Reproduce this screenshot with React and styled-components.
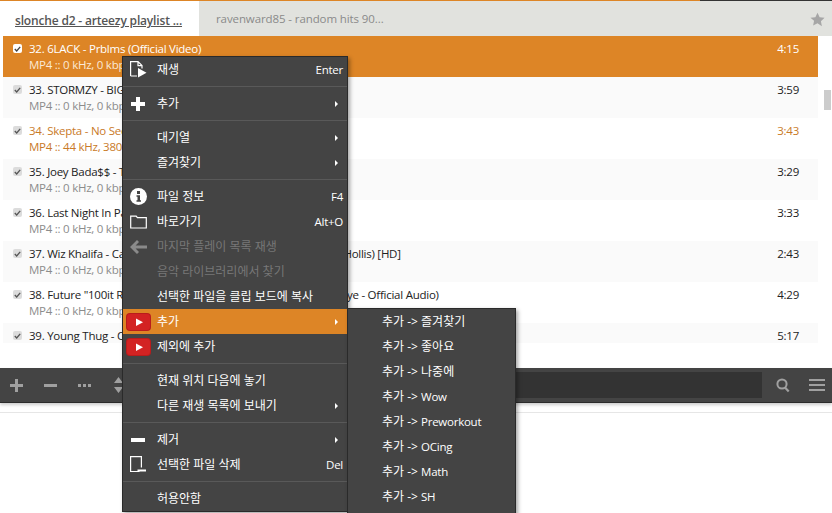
import React from "react";
import styled, { createGlobalStyle } from "styled-components";

const FONT = `"Open Sans", "Noto Sans CJK KR", sans-serif`;

const tracks = [
    { id: 32, title: "32. 6LACK - Prblms (Official Video)", meta: "MP4 :: 0 kHz, 0 kbps, 12.33 MB", time: "4:15", selected: true },
    { id: 33, title: "33. STORMZY - BIG FOR YOUR BOOTS", meta: "MP4 :: 0 kHz, 0 kbps, 9.54 MB", time: "3:59", even: true },
    { id: 34, title: "34. Skepta - No Security", meta: "MP4 :: 44 kHz, 380 kbps, 8.18 MB", time: "3:43", playing: true },
    { id: 35, title: "35. Joey Bada$$ - Temptation", meta: "MP4 :: 0 kHz, 0 kbps, 8.01 MB", time: "3:29", even: true },
    { id: 36, title: "36. Last Night In Paradise", meta: "MP4 :: 0 kHz, 0 kbps, 8.40 MB", time: "3:33" },
    { id: 37, title: "37. Wiz Khalifa - Cabin Fever feat. Curren$y, Snoop Dogg, and Hollis) [HD]", meta: "MP4 :: 0 kHz, 0 kbps, 6.12 MB", time: "2:43", even: true },
    { id: 38, title: "38. Future \"100it Racks\" ft. Drake, Young Thug, Metro, and Kanye - Official Audio)", meta: "MP4 :: 0 kHz, 0 kbps, 10.2 MB", time: "4:29" },
    { id: 39, title: "39. Young Thug - Constantly Hating", meta: "MP4 :: 0 kHz, 0 kbps, 11.9 MB", time: "5:17", even: true },
];

const PageIcon = () => (
    <svg width="17" height="17" viewBox="0 0 17 17" fill="none">
        <path d="M.6 15V.6h7.400l4 4v3M8 .6v4h4M.6 15h6.400" stroke="#fff" strokeWidth="1.200" />
        <path d="M8 7l8.500 4.700L8 16.500z" fill="#fff" />
    </svg>
);
const PlusIcon = () => (
    <svg width="16" height="16" viewBox="0 0 16 16">
        <path d="M6 1h4v5h5v4h-5v5H6v-5H1V6h5z" fill="#fff" />
    </svg>
);
const InfoIcon = () => (
    <svg width="17" height="17" viewBox="0 0 17 17">
        <circle cx="8.5" cy="8.5" r="8.5" fill="#fff" />
        <rect x="7" y="3" width="3" height="3" fill="#444" />
        <path d="M6.5 7.2H10v5h1v1.6H6.5v-1.6h1v-3.4h-1z" fill="#444" />
    </svg>
);
const FolderIcon = () => (
    <svg width="17" height="15" viewBox="0 0 17 15" fill="none">
        <path d="M.7 14V2.2h5.5l1.2 1.5h8.9V14z" stroke="#fff" strokeWidth="1.2" />
    </svg>
);
const BackIcon = () => (
    <svg width="17" height="14" viewBox="0 0 17 14">
        <path d="M7 0l2 2-3.4 3.400H17v3H5.600L9 12l-2 2L0 7z" fill="#8a8a8a" />
    </svg>
);
const YoutubeIcon = () => (
    <svg width="25" height="18" viewBox="0 0 25 18">
        <rect x="0" y="0" width="25" height="18" rx="4" fill="#b91c1c" />
        <rect x="1" y="1" width="23" height="16" rx="3" fill="#d32323" />
        <path d="M10 5.500l7 3.700-7 3.800z" fill="#fff" />
    </svg>
);
const MinusIcon = () => (
    <svg width="14" height="4" viewBox="0 0 14 4">
        <rect width="14" height="4" fill="#fff" />
    </svg>
);
const TrashIcon = () => (
    <svg width="17" height="17" viewBox="0 0 17 17" fill="none">
        <path d="M9.500 15.500H.6V.6h10.800v11" stroke="#fff" strokeWidth="1.200" />
        <rect x="7.500" y="13.500" width="8.500" height="2" fill="#fff" />
    </svg>
);
const CheckIcon = ({ color }) => (
    <svg width="7" height="6" viewBox="0 0 7 6" fill="none">
        <path d="M.8 3l1.900 2L6.200.8" stroke={color} strokeWidth="1.300" />
    </svg>
);

const topMenu = [
    [{ label: "재생", icon: <PageIcon />, shortcut: "Enter", strong: true }],
    [{ label: "추가", icon: <PlusIcon />, arrow: true }],
    [
        { label: "대기열", arrow: true },
        { label: "즐겨찾기", arrow: true },
    ],
    [
        { label: "파일 정보", icon: <InfoIcon />, shortcut: "F4" },
        { label: "바로가기", icon: <FolderIcon />, shortcut: "Alt+O" },
        { label: "마지막 플레이 목록 재생", icon: <BackIcon />, disabled: true },
        { label: "음악 라이브러리에서 찾기", disabled: true },
        { label: "선택한 파일을 클립 보드에 복사" },
        { label: "추가", icon: <YoutubeIcon />, arrow: true, active: true },
        { label: "제외에 추가", icon: <YoutubeIcon /> },
    ],
    [
        { label: "현재 위치 다음에 놓기" },
        { label: "다른 재생 목록에 보내기", arrow: true },
    ],
    [
        { label: "제거", icon: <MinusIcon />, arrow: true },
        { label: "선택한 파일 삭제", icon: <TrashIcon />, shortcut: "Del" },
    ],
    [{ label: "허용안함" }],
];

const subMenu = [
    { name: "즐겨찾기" },
    { name: "좋아요" },
    { name: "나중에" },
    { name: "Wow", latin: true },
    { name: "Preworkout", latin: true },
    { name: "OCing", latin: true },
    { name: "Math", latin: true },
    { name: "SH", latin: true },
];

const App = () => (
    <Page>
        <GlobalStyle />
        <Progress>
            <ProgressFill style={{ width: `${(700 / 832) * 100}%` }} />
        </Progress>
        <Tabs>
            <ActiveTab>slonche d2 - arteezy playlist ...</ActiveTab>
            <IdleTab>
                <IdleTitle>ravenward85 - random hits 90...</IdleTitle>
                <Star viewBox="0 0 24 24">
                    <path d="M12 1l3.400 7.300 7.900 1-5.800 5.500 1.500 7.900L12 17.900l-7 3.800 1.500-7.900L.7 9.300l7.900-1z" fill="#a6a6a6" />
                </Star>
            </IdleTab>
        </Tabs>
        <ListArea>
            <TrackList>
                {tracks.map(t => (
                    <Track key={t.id} selected={t.selected} even={t.even} playing={t.playing}>
                        <Check selected={t.selected}>
                            <CheckIcon color={t.selected ? "#444" : "#555"} />
                        </Check>
                        <TrackText>
                            <TrackTitle>{t.title}</TrackTitle>
                            <TrackMeta selected={t.selected} playing={t.playing}>{t.meta}</TrackMeta>
                        </TrackText>
                        <TrackTime>{t.time}</TrackTime>
                    </Track>
                ))}
            </TrackList>
            <ScrollThumb />
        </ListArea>
        <Toolbar>
            <ToolButton>
                <svg width="15" height="15" viewBox="0 0 15 15">
                    <path d="M5.500 1h3v5h5v3h-5v5h-3V9h-5V6h5z" fill="#a0a0a0" transform="translate(.5 0)" />
                </svg>
            </ToolButton>
            <ToolButton>
                <svg width="15" height="15" viewBox="0 0 15 15">
                    <rect x="1" y="6" width="13" height="3" fill="#a0a0a0" />
                </svg>
            </ToolButton>
            <ToolButton>
                <svg width="15" height="15" viewBox="0 0 15 15">
                    <path d="M1 6h3v3H1zM6 6h3v3H6zM11 6h3v3h-3z" fill="#a0a0a0" />
                </svg>
            </ToolButton>
            <ToolButton>
                <svg width="15" height="18" viewBox="0 0 15 18">
                    <path d="M7.500 1l4.500 6H3zM3 11h9l-4.500 6z" fill="#a0a0a0" />
                </svg>
            </ToolButton>
            <SearchField />
            <SearchGlyph viewBox="0 0 14 15" fill="none">
                <circle cx="6" cy="6" r="4.600" stroke="#a0a0a0" strokeWidth="2" />
                <path d="M9.200 9.800l3.500 3.700" stroke="#a0a0a0" strokeWidth="2.200" />
            </SearchGlyph>
            <MenuGlyph>
                <MenuBar />
                <MenuBar />
                <MenuBar />
            </MenuGlyph>
        </Toolbar>
        <FooterLine />

        <ContextMenu>
            {topMenu.map((group, i) => (
                <React.Fragment key={i}>
                    {i > 0 && <Separator />}
                    {group.map(item => (
                        <MenuItem key={item.label + i} active={item.active} disabled={item.disabled}>
                            <IconSlot>{item.icon}</IconSlot>
                            <ItemLabel>{item.label}</ItemLabel>
                            {item.shortcut && <Shortcut>{item.shortcut}</Shortcut>}
                            {item.arrow && <Arrow />}
                        </MenuItem>
                    ))}
                </React.Fragment>
            ))}
        </ContextMenu>
        <SubMenu>
            {subMenu.map(item => (
                <SubItem key={item.name}>
                    추가 -&gt; <SubName latin={item.latin}>{item.name}</SubName>
                </SubItem>
            ))}
        </SubMenu>
    </Page>
);

const GlobalStyle = createGlobalStyle`
    html, body {
        margin: 0;
        padding: 0;
        background: #fff;
    }
    body {
        font-family: ${FONT};
        font-size: 11.5px;
        overflow: hidden;
    }
`;

const Page = styled.div`
    position: relative;
    width: 832px;
    height: 513px;
    overflow: hidden;
    background: #fff;
`;

const Progress = styled.div`
    height: 1px;
    background: #333;
`;

const ProgressFill = styled.div`
    height: 100%;
    background: #dd8526;
`;

const Tabs = styled.div`
    display: flex;
    height: 35px;
`;

const ActiveTab = styled.div`
    width: 199px;
    box-sizing: border-box;
    padding: 11px 0 0 15px;
    font-size: 12px;
    font-weight: 600;
    letter-spacing: -0.17px;
    color: #555;
    text-decoration: underline;
    white-space: nowrap;
`;

const IdleTab = styled.div`
    flex: 1;
    display: flex;
    align-items: center;
    justify-content: space-between;
    padding: 0 7px 0 17px;
    background: #e1e2de;
`;

const IdleTitle = styled.span`
    font-size: 11.5px;
    letter-spacing: -0.1px;
    color: #8a8a8a;
`;

const Star = styled.svg`
    width: 15px;
    height: 15px;
    margin-top: 2px;
`;

const ListArea = styled.div`
    display: flex;
    height: 307px;
    overflow: hidden;
`;

const TrackList = styled.div`
    width: 815px;
    margin-left: 3px;
`;

const Track = styled.div`
    display: flex;
    height: 41px;
    box-sizing: border-box;
    padding: 5px 19px 0 10px;
    background: ${p => (p.selected ? "#dd8526" : p.even ? "#fafafa" : "#fff")};
    color: ${p => (p.selected ? "#fff" : p.playing ? "#c97a28" : "#222")};
    letter-spacing: -0.25px;
`;

const Check = styled.div`
    display: flex;
    align-items: center;
    justify-content: center;
    width: 9px;
    height: 9px;
    margin-top: 3px;
    border-radius: 2px;
    background: ${p => (p.selected ? "#fff" : "#dcdcdc")};
`;

const TrackText = styled.div`
    flex: 1;
    min-width: 0;
    margin-left: 7px;
    line-height: 16px;
    white-space: nowrap;
`;

const TrackTitle = styled.div``;

const TrackMeta = styled.div`
    color: ${p => (p.selected ? "#fbe9d5" : p.playing ? "#c97a28" : "#8c8c8c")};
`;

const TrackTime = styled.div`
    line-height: 16px;
`;

const ScrollThumb = styled.div`
    width: 7px;
    height: 20px;
    margin: 54px 0 0 6px;
    background: #ccc;
`;

const Toolbar = styled.div`
    display: flex;
    align-items: center;
    height: 34px;
    margin-top: 25px;
    padding-left: 9px;
    background: #444;
    border-bottom: 1px solid #2c2c2c;
    box-shadow: 0 2px 3px rgba(0, 0, 0, 0.2);
`;

const ToolButton = styled.div`
    display: flex;
    align-items: center;
    justify-content: center;
    width: 15px;
    height: 18px;
    margin-right: 19px;
`;

const SearchField = styled.div`
    width: 580px;
    height: 26px;
    margin-left: 37px;
    background: #333;
`;

const SearchGlyph = styled.svg`
    width: 14px;
    height: 15px;
    margin-left: 14px;
`;

const MenuGlyph = styled.div`
    display: flex;
    flex-direction: column;
    gap: 3px;
    margin-left: 19px;
`;

const MenuBar = styled.div`
    width: 16px;
    height: 2px;
    background: #a0a0a0;
`;

const FooterLine = styled.div`
    height: 1px;
    margin-top: 9px;
    background: #e6e6e6;
`;

const ContextMenu = styled.div`
    position: absolute;
    left: 122px;
    top: 56px;
    width: 226px;
    box-sizing: border-box;
    background: #444;
    border: 1px solid #2a2a2a;
    box-shadow: 2px 2px 4px rgba(0, 0, 0, 0.35);
`;

const Separator = styled.div`
    height: 1px;
    margin: 4px 0;
    background: #595959;
`;

const MenuItem = styled.div`
    display: flex;
    align-items: center;
    height: 25px;
    background: ${p => (p.active ? "#dd8526" : "transparent")};
    color: ${p => (p.disabled ? "#777" : "#fff")};
`;

const IconSlot = styled.div`
    display: flex;
    align-items: center;
    justify-content: center;
    width: 30px;
    flex: none;
`;

const ItemLabel = styled.div`
    flex: 1;
    margin-left: 4px;
    padding-bottom: 2px;
    font-size: 12px;
    white-space: nowrap;
`;

const Shortcut = styled.div`
    margin-right: 4px;
    font-size: 11.5px;
    letter-spacing: -0.25px;
    color: #fff;
`;

const Arrow = styled.div`
    width: 0;
    height: 0;
    margin-right: 9px;
    border-left: 3px solid #fff;
    border-top: 3px solid transparent;
    border-bottom: 3px solid transparent;
`;

const SubMenu = styled.div`
    position: absolute;
    left: 347px;
    top: 308px;
    width: 169px;
    height: 210px;
    box-sizing: border-box;
    background: #444;
    border: 1px solid #2a2a2a;
    box-shadow: 2px 2px 4px rgba(0, 0, 0, 0.35);
`;

const SubItem = styled.div`
    height: 25px;
    line-height: 25px;
    padding-left: 34px;
    color: #fff;
    font-size: 12px;
    white-space: nowrap;
`;

const SubName = styled.span`
    font-size: ${p => (p.latin ? "11.5px" : "12px")};
    letter-spacing: ${p => (p.latin ? "-0.25px" : "0")};
`;

export default App;
